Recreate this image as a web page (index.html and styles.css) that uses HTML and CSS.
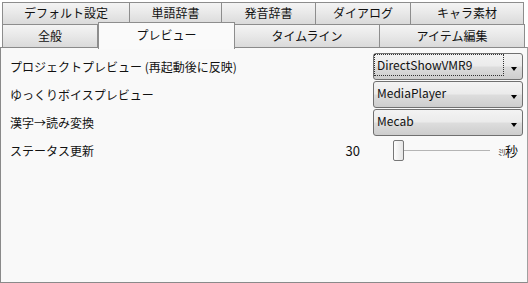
FILE: index.html
```html
<!DOCTYPE html>
<html lang="ja">
<head>
<meta charset="UTF-8" />
<title>設定</title>
<link rel="stylesheet" href="styles.css">
</head>
<body>

<div class="tabs">
  <div class="tab-row top">
    <div class="tab w1">デフォルト設定</div>
    <div class="tab w2">単語辞書</div>
    <div class="tab w3">発音辞書</div>
    <div class="tab w4">ダイアログ</div>
    <div class="tab w5">キャラ素材</div>
  </div>
  <div class="tab-row bottom">
    <div class="tab w6">全般</div>
    <div class="tab w7 selected">プレビュー</div>
    <div class="tab w8">タイムライン</div>
    <div class="tab w8">アイテム編集</div>
  </div>
</div>

<div class="panel">
  <div class="row">
    <span class="label">プロジェクトプレビュー (再起動後に反映)</span>
    <div class="combo"><span class="value focused">DirectShowVMR9</span><span class="arrow"></span></div>
  </div>
  <div class="row">
    <span class="label">ゆっくりボイスプレビュー</span>
    <div class="combo"><span class="value">MediaPlayer</span><span class="arrow"></span></div>
  </div>
  <div class="row">
    <span class="label">漢字→読み変換</span>
    <div class="combo"><span class="value">Mecab</span><span class="arrow"></span></div>
  </div>
  <div class="row slider-row">
    <span class="label">ステータス更新</span>
    <div class="slider-group">
      <span class="num">30</span>
      <div class="slider"><span class="thumb"></span><span class="track"></span></div>
      <span class="unit"><small>ﾐﾘ</small>秒</span>
    </div>
  </div>
</div>

</body>
</html>
```

FILE: styles.css
```css
body {
  margin: 0;
  background: #fff;
  color: #111;
  font-family: "Noto Sans CJK JP", "Noto Sans", sans-serif;
  font-size: 12px;
  width: 528px;
  height: 283px;
  overflow: hidden;
}
.tabs {
  padding: 2px 0 0 2px;
}
.tab-row {
  display: flex;
  height: 22px;
}
.tab-row.bottom {
  height: 23px;
}
.tab {
  box-sizing: border-box;
  border: 1px solid #8d8d8d;
  border-left: none;
  background: linear-gradient(#f4f4f4, #e8e8e8 50%, #dadada);
  text-align: center;
  line-height: 20px;
}
.tab:first-child {
  border-left: 1px solid #8d8d8d;
}
.top .tab {
  border-bottom: none;
}
.bottom .tab {
  border-bottom: none;
  line-height: 22px;
}
.w1 { width: 128px; }
.w2 { width: 92px; }
.w3 { width: 94px; }
.w4 { width: 95px; }
.w5 { width: 113px; }
.w6 { width: 96px; }
.w7 { width: 137px; }
.w8 { width: 145px; }
.tab.selected {
  position: relative;
  z-index: 1;
  margin-top: -2px;
  height: 27px;
  background: #fafafa;
  border-left: 1px solid #8d8d8d;
  line-height: 24px;
}
.tab.selected + .tab {
  border-left: none;
}
.panel {
  box-sizing: border-box;
  height: 236px;
  border: 1px solid #8a8a8a;
  border-right-color: #a0a0a0;
  background: #f9f9f9;
  padding: 4px 4px 0 9px;
}
.row {
  display: flex;
  align-items: center;
  justify-content: space-between;
  height: 28px;
}
.combo {
  box-sizing: border-box;
  display: flex;
  align-items: center;
  justify-content: space-between;
  width: 150px;
  height: 27px;
  border: 1px solid #707070;
  border-radius: 3px;
  background: linear-gradient(#f3f3f3, #ebebeb 48%, #dddddd 52%, #cdcdcd);
  padding: 0 5px 0 1px;
}
.value {
  padding: 1px 2px;
  line-height: 18px;
  margin-top: -3px;
}
.value.focused {
  flex: 1;
  margin-right: 8px;
  outline: 1px dotted #333;
  outline-offset: 0;
}
.arrow {
  width: 0;
  height: 0;
  border-left: 3px solid transparent;
  border-right: 3px solid transparent;
  border-top: 4px solid #000;
  margin-top: 6px;
}
.slider-group {
  display: flex;
  align-items: center;
  padding-right: 5px;
  font-size: 13px;
}
.num {
  margin-right: 33px;
}
.slider {
  display: flex;
  align-items: center;
  width: 105px;
}
.thumb {
  box-sizing: border-box;
  width: 11px;
  height: 21px;
  border: 1px solid #777;
  border-radius: 2px;
  background: linear-gradient(90deg, #fdfdfd, #e6e6e6);
}
.track {
  flex: 1;
  height: 1px;
  background: #b5b5b5;
  margin-right: 8px;
}
.unit small {
  font-size: 9px;
  letter-spacing: -1px;
  color: #444;
}
```
